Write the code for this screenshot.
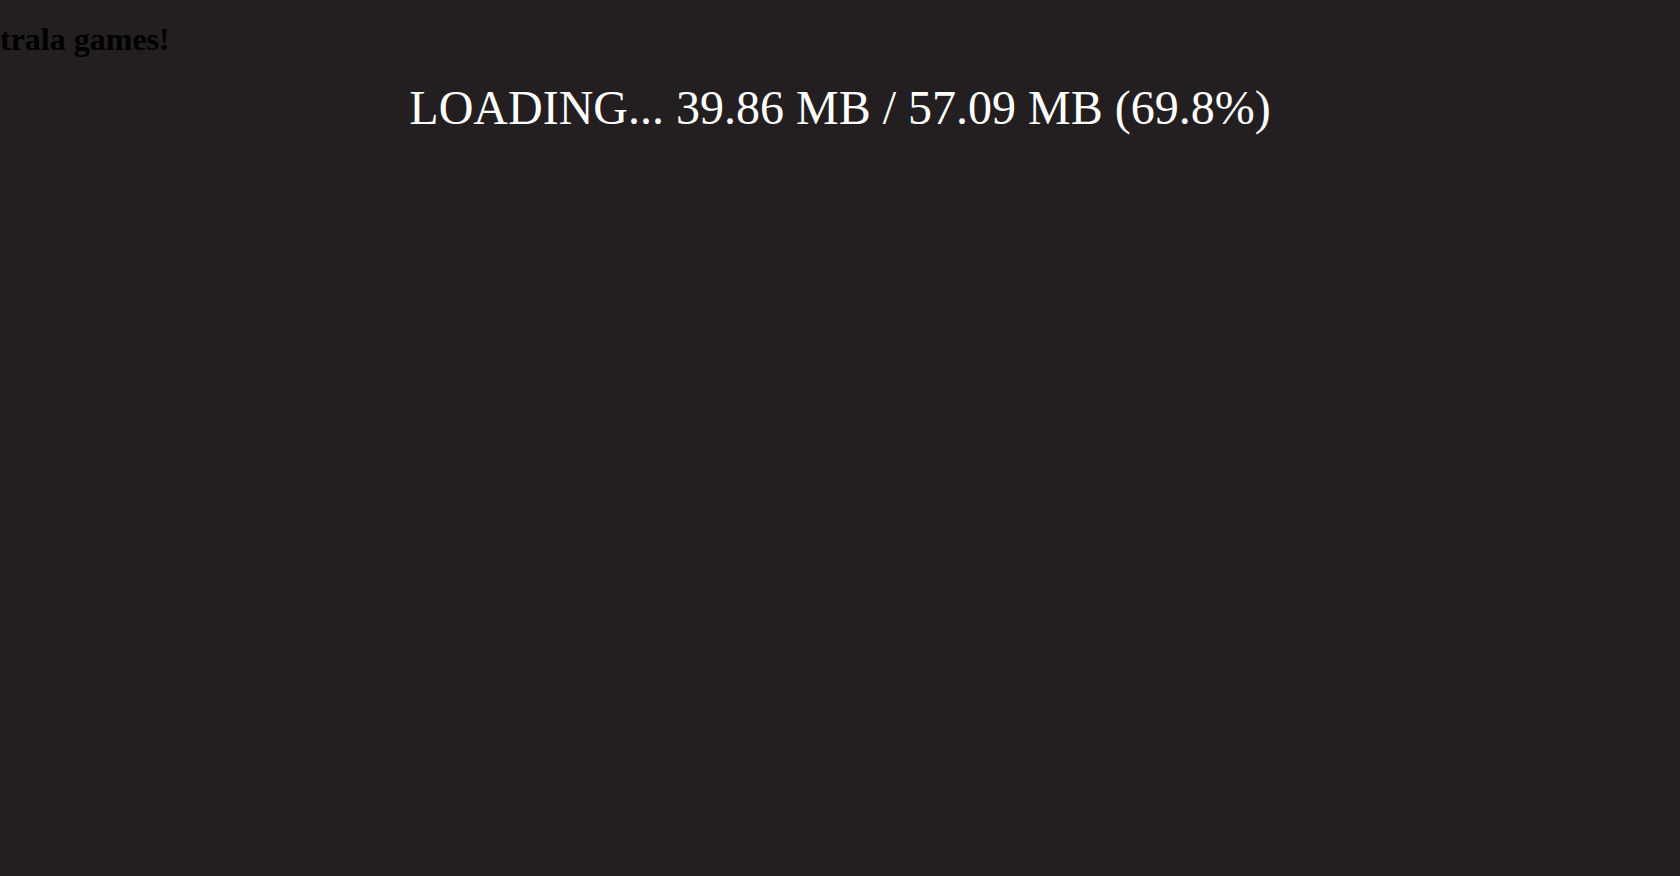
export default function App() {
  return (
    <div className="min-h-screen bg-[#231f20] font-['Liberation_Serif',serif] flow-root">
      <h1 className="my-[21.44px] text-[32px] leading-[normal] font-bold text-black">trala games!</h1>
      <div className="text-center text-[48px] leading-[normal] text-white">
        LOADING... 39.86 MB / 57.09 MB (69.8%)
      </div>
    </div>
  )
}
